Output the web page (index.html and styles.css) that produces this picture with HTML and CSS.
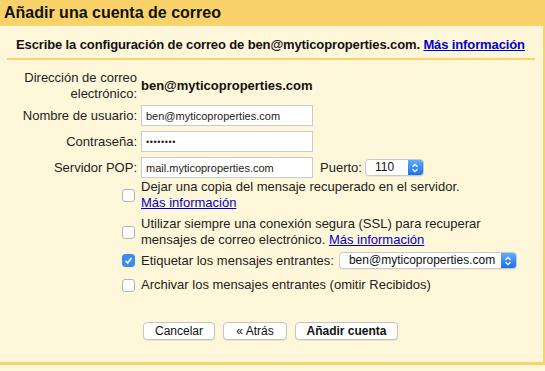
FILE: index.html
```html
<!DOCTYPE html>
<html lang="es">
<head>
    <meta charset="UTF-8">
    <title>Añadir una cuenta de correo</title>
    <link rel="stylesheet" href="styles.css">
</head>
<body>
    <div class="title">Añadir una cuenta de correo</div>
    <div class="panel">
        <div class="intro">Escribe la configuración de correo de ben@myticoproperties.com. <a href="#">Más información</a></div>

        <div class="form">
            <div class="row row-email">
                <div class="label">Dirección de correo<br>electrónico:</div>
                <div class="field email">ben@myticoproperties.com</div>
            </div>
            <div class="row">
                <div class="label">Nombre de usuario:</div>
                <input class="field textbox" type="text" value="ben@myticoproperties.com">
            </div>
            <div class="row">
                <div class="label">Contraseña:</div>
                <input class="field textbox pass" type="password" value="secreto1">
            </div>
            <div class="row row-pop">
                <div class="label">Servidor POP:</div>
                <input class="field textbox" type="text" value="mail.myticoproperties.com">
                <span class="port-label">Puerto:</span>
                <div class="select select-port">
                    <span class="select-text">110</span>
                    <span class="select-arrow"><svg width="8" height="12" viewBox="0 0 8 12"><path d="M1.5 4.8 L4 2.3 L6.5 4.8 M1.5 7.2 L4 9.7 L6.5 7.2" fill="none" stroke="#fff" stroke-width="1.3"/></svg></span>
                </div>
            </div>

            <div class="row row-check">
                <div class="label"><span class="box"></span></div>
                <div class="field">Dejar una copia del mensaje recuperado en el servidor.<br><a href="#">Más información</a></div>
            </div>
            <div class="row row-check row-ssl">
                <div class="label"><span class="box"></span></div>
                <div class="field">Utilizar siempre una conexión segura (SSL) para recuperar<br>mensajes de correo electrónico. <a href="#">Más información</a></div>
            </div>
            <div class="row row-check row-tag">
                <div class="label"><span class="box on"><svg width="13" height="13" viewBox="0 0 13 13"><path d="M3.6 6.9 L5.6 9 L9.4 3.9" fill="none" stroke="#fff" stroke-width="1.6"/></svg></span></div>
                <div class="field">Etiquetar los mensajes entrantes:</div>
                <div class="select select-tag">
                    <span class="select-text">ben@myticoproperties.com</span>
                    <span class="select-arrow"><svg width="8" height="12" viewBox="0 0 8 12"><path d="M1.5 4.8 L4 2.3 L6.5 4.8 M1.5 7.2 L4 9.7 L6.5 7.2" fill="none" stroke="#fff" stroke-width="1.3"/></svg></span>
                </div>
            </div>
            <div class="row row-check">
                <div class="label"><span class="box"></span></div>
                <div class="field">Archivar los mensajes entrantes (omitir Recibidos)</div>
            </div>
        </div>

        <div class="buttons">
            <button class="btn btn-cancel">Cancelar</button>
            <button class="btn btn-back">« Atrás</button>
            <button class="btn btn-add">Añadir cuenta</button>
        </div>
    </div>
</body>
</html>
```

FILE: styles.css
```css
body {
    margin: 0;
    font-family: "Liberation Sans", Arial, sans-serif;
    font-size: 13px;
    color: #222;
    background-color: #fff7d9; /* cream */
}
a {
    color: #0000cc;
}
.title {
    height: 26px;
    line-height: 26px;
    padding-left: 4px;
    font-size: 16px;
    font-weight: bold;
    color: #111;
    background-color: #f9d36a; /* yellow bar */
}
.panel {
    height: 339px;
    box-sizing: border-box;
    border-right: 2px solid #f9d36a;
    border-bottom: 3px solid #f9d36a;
}
.intro {
    margin: 0 8px 0 7px;
    padding: 11px 0 6px 9px;
    line-height: 15px;
    font-weight: bold;
    letter-spacing: -0.12px;
    color: #111;
    border-bottom: 2px solid #f9d36a;
}
.form {
    padding-top: 10px;
}
.row {
    display: flex;
    align-items: center;
    line-height: 16px;
    margin-bottom: 5px;
}
.row-email {
    margin-bottom: 3px;
}
.row-pop {
    margin-bottom: 1px;
}
.row-ssl {
    margin-bottom: 4px;
}
.row-tag {
    margin-bottom: 8px;
}
.label {
    width: 137px;
    flex-shrink: 0;
    text-align: right;
}
.row-check .label {
    display: flex;
    justify-content: flex-end;
    padding-right: 2px;
    box-sizing: border-box;
}
.field {
    margin-left: 4px;
}
.email {
    font-weight: bold;
    color: #111;
}
.textbox {
    width: 172px;
    height: 21px;
    box-sizing: border-box;
    margin-top: 0;
    margin-bottom: 0;
    padding: 0 4px;
    border: 1px solid #cbcbcb;
    background: #fff;
    font-family: inherit;
    font-size: 11px;
    color: #222;
    outline: none;
}
.pass {
    font-size: 9px;
    letter-spacing: 0.6px;
}
.port-label {
    margin-left: 7px;
}
.select {
    display: flex;
    height: 17px;
    box-sizing: border-box;
    border: 1px solid #c9c9c9;
    border-radius: 4px;
    background: #fff;
    overflow: hidden;
    box-shadow: 0 1px 1px rgba(0, 0, 0, 0.06);
}
.select-text {
    flex: 1;
    padding-left: 9px;
    line-height: 15px;
    font-size: 12px;
    color: #111;
}
.select-arrow {
    width: 15px;
    display: flex;
    align-items: center;
    justify-content: center;
    background: linear-gradient(#62abfb, #1d6ff0);
}
.select-port {
    width: 59px;
    margin-left: 3px;
}
.select-tag {
    width: 178px;
    margin-left: 5px;
}
.box {
    width: 13px;
    height: 13px;
    box-sizing: border-box;
    border: 1px solid #b4b4b4;
    border-radius: 3px;
    background: #fff;
    display: block;
}
.box.on {
    border-color: #3c8cf2;
    background: #3c8cf2;
}
.box svg {
    display: block;
    margin: -1px;
}
.buttons {
    display: flex;
    justify-content: center;
    gap: 8px;
    padding-top: 24px;
    padding-right: 2px;
}
.btn {
    height: 18px;
    padding: 0;
    box-sizing: border-box;
    border: 1px solid #c4c4c4;
    border-radius: 4px;
    background: #fff;
    font-family: inherit;
    font-size: 12px;
    color: #111;
    box-shadow: 0 1px 0 rgba(0, 0, 0, 0.08);
}
.btn-cancel {
    width: 72px;
}
.btn-back {
    width: 64px;
}
.btn-add {
    width: 103px;
    font-weight: bold;
}
```
